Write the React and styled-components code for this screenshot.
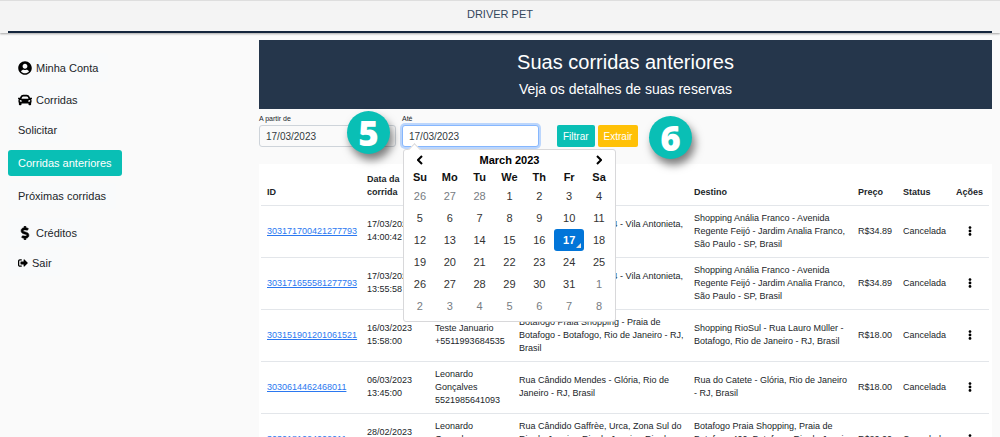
import React from "react";
import styled, { createGlobalStyle, css } from "styled-components";
import { FaUserCircle, FaCar, FaDollarSign, FaSignOutAlt, FaEllipsisV } from "react-icons/fa";

const GlobalStyle = createGlobalStyle`
  * { box-sizing: border-box; }
  html { height: 100%; overflow: hidden; }
  body {
    margin: 0;
    height: 100%;
    overflow: hidden;
    background: #fafafa;
    color: #212529;
    font-family: "Liberation Sans", Arial, sans-serif;
    font-size: 11px;
  }
  button, input { font-family: inherit; }
`;

const TopBar = styled.header`
  height: 33px;
  padding: 0 8px;
  background: #f4f4f4;
  border-top: 1px solid #dedede;
  box-shadow: 0 1px 2px rgba(0, 0, 0, 0.35);
`;

const Brand = styled.div`
  height: 32px;
  border-bottom: 2px solid #14253c;
  line-height: 27px;
  text-align: center;
  color: #34475c;
`;

const Layout = styled.div`
  display: grid;
  grid-template-columns: 251px minmax(0, 1fr);
  padding: 7px 8px 0;
`;

const Sidebar = styled.nav`
  display: flex;
  flex-direction: column;
  align-items: flex-start;
  gap: 3px;
  padding-top: 13px;
`;

const SubMenu = styled.div`
  display: flex;
  flex-direction: column;
  align-items: flex-start;
  gap: 7px;
  margin-bottom: 6px;
`;

const NavItem = styled.a`
  display: flex;
  align-items: center;
  gap: 4px;
  height: ${(p) => (p.$tall ? 29 : 26)}px;
  padding: 0 9px;
  border: 1px solid transparent;
  border-radius: 3px;
  background: ${(p) => (p.$active ? "#09bfb5" : "#f9fafb")};
  color: ${(p) => (p.$active ? "#fff" : "#212529")};
  text-decoration: none;
  white-space: nowrap;
`;

const NavIcon = styled.span`
  display: flex;
  justify-content: center;
  width: ${(p) => p.$width}px;
  color: #000;
`;

const Main = styled.main`
  min-width: 0;
`;

const Banner = styled.section`
  height: 69px;
  padding-top: 10px;
  background: #25364b;
  color: #fff;
  text-align: center;
`;

const Title = styled.h1`
  margin: 0;
  font-size: 20px;
  font-weight: 400;
  line-height: 24px;
`;

const Subtitle = styled.p`
  margin: 6px 0 0;
  font-size: 14px;
  line-height: 18px;
`;

const Filters = styled.form`
  display: flex;
  align-items: flex-end;
  height: 38px;
  gap: 6px;
`;

const Field = styled.div`
  position: relative;
  display: flex;
  flex-direction: column;
  width: 137px;
`;

const Label = styled.label`
  font-size: 7px;
  line-height: 10px;
`;

const DateInput = styled.input`
  width: 100%;
  height: 22px;
  margin-top: 1px;
  padding: 0 6px;
  border: 1px solid #ced4da;
  border-radius: 3px;
  background: ${(p) => (p.$focused ? "#fff" : "#fafafa")};
  color: #333a41;
  font-size: 10px;
  outline: none;
  ${(p) =>
    p.$focused &&
    css`
      border-color: #86b7fe;
      box-shadow: 0 0 0 2px #bcd6fc;
    `}
`;

const Actions = styled.div`
  position: relative;
  display: flex;
  gap: 3px;
  margin-left: 12px;
`;

const Button = styled.button`
  height: 22px;
  padding: 0 6px;
  border: 0;
  border-radius: 2px;
  background: ${(p) => p.$color};
  color: #fff;
  font-size: 10px;
`;

const StepBadge = styled.span`
  position: absolute;
  z-index: 3;
  left: ${(p) => p.$left}px;
  top: ${(p) => p.$top}px;
  display: flex;
  align-items: center;
  justify-content: center;
  width: 43px;
  height: 43px;
  border-radius: 50%;
  background: #09bfb5;
  box-shadow: 3px 6px 9px rgba(0, 0, 0, 0.5);
  color: #fff;
  font: 800 35px/43px "Open Sans", sans-serif;
`;

const Popover = styled.div`
  position: absolute;
  z-index: 2;
  left: 1px;
  top: 35px;
  width: 213px;
  height: 173px;
  padding: 0 1px;
  border: 1px solid #d8d8da;
  border-radius: 3px;
  background: #fff;
  color: #333;

  &::before {
    content: "";
    position: absolute;
    left: 6px;
    top: -5px;
    width: 8px;
    height: 8px;
    border: 1px solid #d8d8da;
    border-width: 1px 0 0 1px;
    background: #fff;
    transform: rotate(45deg);
  }
`;

const MonthBar = styled.div`
  position: relative;
  display: flex;
  align-items: center;
  justify-content: space-between;
  height: 20px;
  padding: 0 12px;
  color: #000;
  font-size: 11px;
  font-weight: 700;
`;

const ArrowButton = styled.button`
  display: flex;
  padding: 0;
  border: 0;
  background: none;
  color: #000;
`;

const CalendarTable = styled.table`
  width: 100%;
  table-layout: fixed;
  border-collapse: collapse;
  font-size: 11px;
  line-height: 14px;
  text-align: center;

  th {
    height: 15px;
    padding: 0 0 1px;
    color: #111;
  }
`;

const Day = styled.td`
  position: relative;
  height: 22px;
  padding: 0;
  color: ${(p) => (p.$muted ? "#777c82" : "#333")};
  ${(p) =>
    p.$selected &&
    css`
      border-radius: 3px;
      background: #0275d8;
      color: #fff;
      font-weight: 700;

      &::after {
        content: "";
        position: absolute;
        right: 3px;
        bottom: 3px;
        border-left: 5px solid transparent;
        border-bottom: 5px solid #e6e6e6;
      }
    `}
`;

const Panel = styled.section`
  margin-top: 17px;
  padding: 0 3px 0 2px;
  background: #fff;
`;

const RidesTable = styled.table`
  width: 100%;
  table-layout: fixed;
  border-collapse: collapse;
  font-size: 9px;
  line-height: 13px;

  tr {
    border-bottom: 1px solid #e3e6ea;
  }
  th {
    height: 41px;
    padding: 0 0 6px 6px;
    vertical-align: bottom;
    text-align: left;
  }
  td {
    height: 52px;
    padding: 0 0 0 6px;
    vertical-align: middle;
    white-space: pre-line;
  }
`;

const RideLink = styled.a`
  color: #2b78f0;
  text-decoration: underline;
`;

const MenuButton = styled.button`
  display: flex;
  width: 27px;
  justify-content: center;
  padding: 0;
  border: 0;
  background: none;
  color: #000;
`;

const columns = [
  ["ID", 100],
  ["Data da corrida", 68],
  ["", 84],
  ["", 175],
  ["Destino", 164],
  ["Preço", 45],
  ["Status", 53],
  ["Ações", 39],
];
const totalWidth = columns.reduce((sum, c) => sum + c[1], 0);

const franco = "Shopping Anália Franco - Avenida\nRegente Feijó - Jardim Analia Franco,\nSão Paulo - SP, Brasil";
const antonieta = "Rua Domingos Lisboa, 4 - Vila Antonieta,\nSão Paulo - SP, Brasil";

const rides = [
  ["303171700421277793", "17/03/2023\n14:00:42", "Teste Januario\n+5511993684535", antonieta, franco, "R$34.89"],
  ["303171655581277793", "17/03/2023\n13:55:58", "Teste Januario\n+5511993684535", antonieta, franco, "R$34.89"],
  [
    "303151901201061521",
    "16/03/2023\n15:58:00",
    "Teste Januario\n+5511993684535",
    "Botafogo Praia Shopping - Praia de\nBotafogo - Botafogo, Rio de Janeiro - RJ,\nBrasil",
    "Shopping RioSul - Rua Lauro Müller -\nBotafogo, Rio de Janeiro - RJ, Brasil",
    "R$18.00",
  ],
  [
    "3030614462468011",
    "06/03/2023\n13:45:00",
    "Leonardo\nGonçalves\n5521985641093",
    "Rua Cândido Mendes - Glória, Rio de\nJaneiro - RJ, Brasil",
    "Rua do Catete - Glória, Rio de Janeiro\n- RJ, Brasil",
    "R$18.00",
  ],
  [
    "3030181024002011",
    "28/02/2023\n18:10:00",
    "Leonardo\nGonçalves\n5521985641093",
    "Rua Cândido Gaffrèe, Urca, Zona Sul do\nRio de Janeiro, Rio de Janeiro, Rio de\nJaneiro, Brasil",
    "Botafogo Praia Shopping, Praia de\nBotafogo 400, Botafogo, Rio de Janeiro\n- RJ, Brasil",
    "R$20.00",
  ],
];

const weekDays = ["Su", "Mo", "Tu", "We", "Th", "Fr", "Sa"];
const weeks = [
  [26, 27, 28, 1, 2, 3, 4],
  [5, 6, 7, 8, 9, 10, 11],
  [12, 13, 14, 15, 16, 17, 18],
  [19, 20, 21, 22, 23, 24, 25],
  [26, 27, 28, 29, 30, 31, 1],
  [2, 3, 4, 5, 6, 7, 8],
];
const isOutside = (week, day) => (week === 0 && day > 20) || (week > 3 && day < 20);

function Chevron({ d }) {
  return (
    <svg width="6" height="10" viewBox="0 0 6 10" fill="none" stroke="currentColor" strokeWidth="2">
      <path d={d} />
    </svg>
  );
}

function Calendar() {
  return (
    <Popover>
      <MonthBar>
        <ArrowButton type="button" aria-label="Mês anterior">
          <Chevron d="M5 1L1 5l4 4" />
        </ArrowButton>
        March 2023
        <ArrowButton type="button" aria-label="Próximo mês">
          <Chevron d="M1 1l4 4-4 4" />
        </ArrowButton>
      </MonthBar>
      <CalendarTable>
        <thead>
          <tr>
            {weekDays.map((d) => (
              <th key={d} scope="col">{d}</th>
            ))}
          </tr>
        </thead>
        <tbody>
          {weeks.map((week, w) => (
            <tr key={w}>
              {week.map((day) => (
                <Day key={day} $muted={isOutside(w, day)} $selected={day === 17}>
                  {day}
                </Day>
              ))}
            </tr>
          ))}
        </tbody>
      </CalendarTable>
    </Popover>
  );
}

export default function App() {
  return (
    <>
      <GlobalStyle />
      <TopBar>
        <Brand>DRIVER PET</Brand>
      </TopBar>
      <Layout>
        <Sidebar>
          <NavItem href="#conta" $tall>
            <NavIcon $width={14}><FaUserCircle size={14} /></NavIcon>
            Minha Conta
          </NavItem>
          <NavItem href="#corridas" $tall>
            <NavIcon $width={14}><FaCar size={14} /></NavIcon>
            Corridas
          </NavItem>
          <SubMenu>
            <NavItem href="#solicitar">Solicitar</NavItem>
            <NavItem href="#anteriores" $active>Corridas anteriores</NavItem>
            <NavItem href="#proximas">Próximas corridas</NavItem>
          </SubMenu>
          <NavItem href="#creditos" $tall>
            <NavIcon $width={14}><FaDollarSign size={14} stroke="#000" strokeWidth={20} /></NavIcon>
            Créditos
          </NavItem>
          <NavItem href="#sair">
            <NavIcon $width={10}><FaSignOutAlt size={10} /></NavIcon>
            Sair
          </NavItem>
        </Sidebar>
        <Main>
          <Banner>
            <Title>Suas corridas anteriores</Title>
            <Subtitle>Veja os detalhes de suas reservas</Subtitle>
          </Banner>
          <Filters>
            <Field>
              <Label htmlFor="from">A partir de</Label>
              <DateInput id="from" defaultValue="17/03/2023" />
              <StepBadge $left={88} $top={-3}>5</StepBadge>
            </Field>
            <Field>
              <Label htmlFor="to">Até</Label>
              <DateInput id="to" defaultValue="17/03/2023" $focused />
              <Calendar />
            </Field>
            <Actions>
              <Button type="button" $color="#09bfb5">Filtrar</Button>
              <Button type="button" $color="#ffc107">Extrair</Button>
              <StepBadge $left={92} $top={-9}>6</StepBadge>
            </Actions>
          </Filters>
          <Panel>
            <RidesTable>
              <colgroup>
                {columns.map(([, width], i) => (
                  <col key={i} style={{ width: `${(width / totalWidth) * 100}%` }} />
                ))}
              </colgroup>
              <thead>
                <tr>
                  {columns.map(([name], i) => (
                    <th key={i} scope="col">{name}</th>
                  ))}
                </tr>
              </thead>
              <tbody>
                {rides.map(([id, date, person, from, to, price]) => (
                  <tr key={id}>
                    <td><RideLink href={`#${id}`}>{id}</RideLink></td>
                    <td>{date}</td>
                    <td>{person}</td>
                    <td>{from}</td>
                    <td>{to}</td>
                    <td>{price}</td>
                    <td>Cancelada</td>
                    <td>
                      <MenuButton type="button" aria-label="Ações da corrida">
                        <FaEllipsisV size={10} />
                      </MenuButton>
                    </td>
                  </tr>
                ))}
              </tbody>
            </RidesTable>
          </Panel>
        </Main>
      </Layout>
    </>
  );
}
